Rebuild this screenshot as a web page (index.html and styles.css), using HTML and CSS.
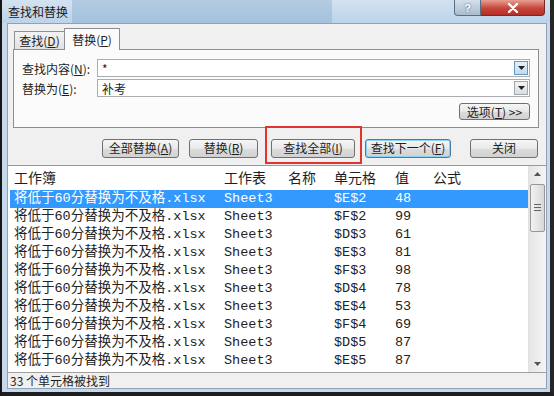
FILE: index.html
```html
<!DOCTYPE html>
<html>
<head>
    <title>查找和替换</title>
    <link rel="stylesheet" href="styles.css">
</head>
<body>
    <div class="window">
        <div class="titlebar">
            <span class="title">查找和替换</span>
            <div class="winbtns">
                <div class="winbtn help">?</div>
                <div class="winbtn close">
                    <svg width="14" height="10" viewBox="0 0 14 10"><path d="M3 1 L11 9 M11 1 L3 9" stroke="#fff" stroke-width="2.4" stroke-linecap="round"/></svg>
                </div>
            </div>
        </div>

        <div class="client">
            <div class="tabs">
                <div class="tab">查找(<u>D</u>)</div>
                <div class="tab active">替换(<u>P</u>)</div>
            </div>
            <div class="panel">
                <div class="field">
                    <label class="label">查找内容(<u>N</u>):</label>
                    <div class="combo">
                        <span class="value">*</span>
                        <span class="drop hot"><svg width="7" height="4" viewBox="0 0 7 4"><path d="M0 0 H7 L3.5 4 Z" fill="#222"/></svg></span>
                    </div>
                </div>
                <div class="field">
                    <label class="label">替换为(<u>E</u>):</label>
                    <div class="combo">
                        <span class="value">补考</span>
                        <span class="drop"><svg width="7" height="4" viewBox="0 0 7 4"><path d="M0 0 H7 L3.5 4 Z" fill="#222"/></svg></span>
                    </div>
                </div>
                <div class="options-row">
                    <button class="btn options">选项(<u>T</u>) &gt;&gt;</button>
                </div>
            </div>

            <div class="actions">
                <button class="btn w-replace-all">全部替换(<u>A</u>)</button>
                <button class="btn w-replace">替换(<u>R</u>)</button>
                <button class="btn w-find-all">查找全部(<u>I</u>)</button>
                <button class="btn w-find-next focused">查找下一个(<u>F</u>)</button>
                <button class="btn w-close">关闭</button>
            </div>

            <div class="results">
                <div class="results-main">
                    <div class="row head">
                        <span>工作簿</span><span>工作表</span><span>名称</span><span>单元格</span><span>值</span><span>公式</span>
                    </div>
                    <div class="rows">
                        <div class="row selected"><span>将低于60分替换为不及格.xlsx</span><span>Sheet3</span><span></span><span>$E$2</span><span>48</span><span></span></div>
                        <div class="row"><span>将低于60分替换为不及格.xlsx</span><span>Sheet3</span><span></span><span>$F$2</span><span>99</span><span></span></div>
                        <div class="row"><span>将低于60分替换为不及格.xlsx</span><span>Sheet3</span><span></span><span>$D$3</span><span>61</span><span></span></div>
                        <div class="row"><span>将低于60分替换为不及格.xlsx</span><span>Sheet3</span><span></span><span>$E$3</span><span>81</span><span></span></div>
                        <div class="row"><span>将低于60分替换为不及格.xlsx</span><span>Sheet3</span><span></span><span>$F$3</span><span>98</span><span></span></div>
                        <div class="row"><span>将低于60分替换为不及格.xlsx</span><span>Sheet3</span><span></span><span>$D$4</span><span>78</span><span></span></div>
                        <div class="row"><span>将低于60分替换为不及格.xlsx</span><span>Sheet3</span><span></span><span>$E$4</span><span>53</span><span></span></div>
                        <div class="row"><span>将低于60分替换为不及格.xlsx</span><span>Sheet3</span><span></span><span>$F$4</span><span>69</span><span></span></div>
                        <div class="row"><span>将低于60分替换为不及格.xlsx</span><span>Sheet3</span><span></span><span>$D$5</span><span>87</span><span></span></div>
                        <div class="row"><span>将低于60分替换为不及格.xlsx</span><span>Sheet3</span><span></span><span>$E$5</span><span>87</span><span></span></div>
                    </div>
                </div>
                <div class="scrollbar">
                    <div class="arrow"><svg width="7" height="4" viewBox="0 0 7 4"><path d="M0 4 H7 L3.5 0 Z" fill="#555"/></svg></div>
                    <div class="thumb"><span class="grip"></span></div>
                    <div class="track"></div>
                    <div class="arrow"><svg width="7" height="4" viewBox="0 0 7 4"><path d="M0 0 H7 L3.5 4 Z" fill="#555"/></svg></div>
                </div>
            </div>

            <div class="status">33 个单元格被找到</div>
        </div>

        <!-- red mark drawn over the screenshot -->
        <div class="highlight"></div>
    </div>
</body>
</html>
```

FILE: styles.css
```css
body {
    margin: 0;
    font-family: "Noto Sans CJK SC", "Liberation Sans", sans-serif;
    font-size: 12px;
    color: #1e1e1e;
}
.window {
    position: relative;
    width: 554px;
    height: 396px;
    box-sizing: border-box;
    border-left: 2px solid #161616;
    border-right: 4px solid #262626;
    border-bottom: 4px solid #1e1e1e;
    padding: 0 3px 3px 5px;
    background: #c6d9ec;
    overflow: hidden;
}
.titlebar {
    height: 23px;
    display: flex;
    align-items: flex-start;
    margin-left: -5px;
    margin-right: -3px;
    padding-left: 6px;
    background:
        linear-gradient(90deg, transparent 70px, rgba(120,160,200,0.35) 70px, rgba(120,160,200,0.35) 330px, transparent 330px),
        linear-gradient(180deg, #d3e2f0, #bcd3ea);
}
.title {
    line-height: 23px;
    font-size: 12px;
    color: #1a1a1a;
}
.winbtns {
    margin-left: auto;
    margin-right: 5px;
    display: flex;
}
.winbtn {
    height: 16px;
    display: flex;
    align-items: center;
    justify-content: center;
    border: 1px solid #5a6e84;
    border-top: none;
    box-sizing: border-box;
}
.help {
    width: 27px;
    border-radius: 0 0 0 4px;
    background: linear-gradient(180deg, #d4dfea, #a8bccf);
    color: #fff;
    font-family: "Liberation Sans", sans-serif;
    font-weight: bold;
    font-size: 11px;
    text-shadow: 0 0 2px #456;
}
.close {
    width: 64px;
    border-left: none;
    border-radius: 0 0 4px 0;
    background: linear-gradient(180deg, #e8a093, #c8443a 55%, #b3302a);
    border-color: #7a2a24;
}
.client {
    height: 366px;
    box-sizing: border-box;
    border: 1px solid #8fa3b8;
    background: #f0f0f0;
    display: flex;
    flex-direction: column;
}
.tabs {
    display: flex;
    align-items: flex-end;
    margin-top: 4px;
    padding-left: 6px;
    height: 21px;
    position: relative;
    z-index: 1;
}
.tab {
    height: 18px;
    width: 51px;
    box-sizing: border-box;
    border: 1px solid #8c8e94;
    border-bottom: none;
    background: linear-gradient(180deg, #f3f3f3, #e2e2e2);
    line-height: 17px;
    text-align: center;
    font-size: 12px;
}
.tab.active {
    height: 22px;
    width: 56px;
    margin-left: -1px;
    margin-bottom: -1px;
    background: #fbfbfb;
    line-height: 22px;
}
.panel {
    margin: 0 7px 0 5px;
    height: 79px;
    box-sizing: border-box;
    border: 1px solid #8c8e94;
    background: #fbfbfb;
    padding: 9px 8px 0 8px;
}
.field {
    display: flex;
    align-items: center;
    height: 18px;
    margin-bottom: 2px;
}
.label {
    width: 75px;
    flex-shrink: 0;
    font-size: 12px;
}
.combo {
    flex: 1;
    height: 18px;
    box-sizing: border-box;
    border: 1px solid #abadb3;
    background: #fff;
    display: flex;
    align-items: center;
    padding: 0 1px 0 4px;
}
.value {
    flex: 1;
    font-size: 12px;
}
.drop {
    width: 14px;
    height: 14px;
    box-sizing: border-box;
    border: 1px solid #a0a8b2;
    background: linear-gradient(180deg, #f4f4f4, #dcdcdc);
    display: flex;
    align-items: center;
    justify-content: center;
}
.drop.hot {
    background: linear-gradient(180deg, #e4f2fb, #bcdcf2);
    border-color: #6d97b9;
}
.options-row {
    display: flex;
    justify-content: flex-end;
    margin-top: 6px;
}
.btn {
    height: 18px;
    box-sizing: border-box;
    border: 1px solid #707070;
    border-radius: 3px;
    background: linear-gradient(180deg, #f6f6f6 0%, #e8e8e8 50%, #dcdcdc 51%, #d2d2d2 100%);
    font-family: "Noto Sans CJK SC", sans-serif;
    font-size: 12px;
    color: #1e1e1e;
    padding: 0;
    line-height: 16px;
}
.options {
    width: 71px;
    height: 17px;
}
.actions {
    display: flex;
    justify-content: flex-end;
    gap: 10px;
    margin-top: 11px;
    padding-right: 8px;
    height: 19px;
}
.actions .btn {
    height: 19px;
}
.w-replace-all { width: 77px; }
.w-replace { width: 69px; }
.w-find-all { width: 84px; margin-left: 3px; }
.w-find-next { width: 86px; }
.w-close { width: 68px; margin-left: 9px; }
.btn.focused {
    border-color: #3c7fb1;
    box-shadow: inset 0 0 0 1px #8ed1f4;
}
.results {
    margin-top: 7px;
    height: 207px;
    border-top: 1px solid #9a9a9a;
    background: #fff;
    display: flex;
    overflow: hidden;
}
.results-main {
    flex: 1;
    overflow: hidden;
}
.row {
    display: grid;
    grid-template-columns: 210px 64px 46px 61px 38px 1fr;
    height: 18px;
    line-height: 18px;
    padding-left: 4px;
    margin-left: 2px;
    font-family: "Liberation Mono", "Noto Sans CJK SC", monospace;
    font-size: 13.5px;
    color: #222;
    white-space: nowrap;
}
.row.head {
    height: 22px;
    line-height: 22px;
    margin-bottom: 2px;
    font-family: "Noto Sans CJK SC", sans-serif;
    font-size: 14px;
    color: #1e1e1e;
}
.row.selected {
    background: #3399ff;
    color: #fff;
}
.scrollbar {
    width: 17px;
    background: linear-gradient(90deg, #e6e6e6, #f4f4f4);
    border-left: 1px solid #e0e0e0;
    display: flex;
    flex-direction: column;
}
.arrow {
    height: 17px;
    display: flex;
    align-items: center;
    justify-content: center;
}
.thumb {
    height: 48px;
    margin: 1px 1px 0 1px;
    box-sizing: border-box;
    border: 1px solid #979797;
    border-radius: 2px;
    background: linear-gradient(90deg, #f2f2f2, #d8d8d8);
    display: flex;
    align-items: center;
    justify-content: center;
}
.grip {
    width: 7px;
    height: 5px;
    border-top: 1px solid #666;
    border-bottom: 1px solid #666;
    background: linear-gradient(180deg, transparent 2px, #666 2px, #666 3px, transparent 3px);
}
.track {
    flex: 1;
}
.status {
    height: 16px;
    box-sizing: border-box;
    border-top: 1px solid #a0a0a0;
    padding-left: 2px;
    line-height: 15px;
    font-size: 12px;
    color: #1e1e1e;
}
.highlight {
    position: absolute;
    left: 263px;
    top: 126px;
    width: 97px;
    height: 38px;
    box-sizing: border-box;
    border: 2px solid #e0352e;
}
```
